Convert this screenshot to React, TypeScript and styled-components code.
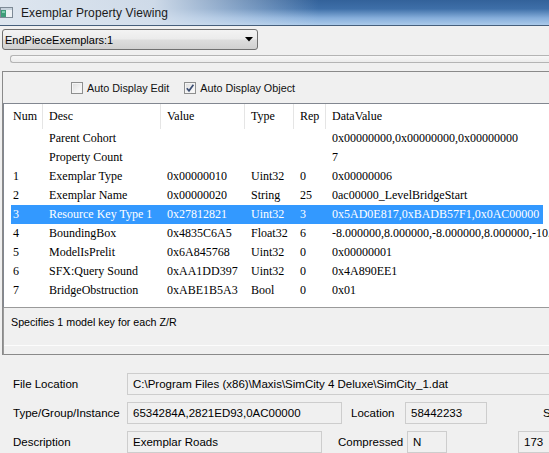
import React from "react";
import styled, { createGlobalStyle } from "styled-components";

const GlobalStyle = createGlobalStyle`
  html, body {
    margin: 0;
    padding: 0;
    background: #f0f0f0;
  }
  body {
    font-family: "Liberation Sans", Arial, sans-serif;
    color: #000;
  }
`;

const Window = styled.div`
  width: 549px;
  height: 453px;
  overflow: hidden;
  background: #f0f0f0;
  display: flex;
  flex-direction: column;
`;

const TitleBar = styled.div`
  flex: none;
  height: 25px;
  display: flex;
  align-items: center;
  gap: 8px;
  border-bottom: 1px solid #465f7c;
  background:
    linear-gradient(90deg, rgba(222, 230, 239, 1) 0%, rgba(214, 224, 236, 0.95) 28%, rgba(205, 219, 235, 0) 58%),
    linear-gradient(180deg, #33629a 0%, #3e6fa8 35%, #86aedb 72%, #abcaea 100%);
`;

const TitleText = styled.span`
  font-size: 12px;
  color: #1a1a1a;
  letter-spacing: 0.1px;
`;

const Body = styled.div`
  flex: 1;
  display: flex;
  flex-direction: column;
  padding-left: 2px;
  min-height: 0;
`;

const Combo = styled.div`
  margin-top: 3px;
  width: 256px;
  height: 21px;
  box-sizing: border-box;
  border: 1px solid #707070;
  border-radius: 3px;
  background: linear-gradient(180deg, #f3f3f3 0%, #ebebeb 48%, #dddddd 52%, #d0d0d0 100%);
  display: flex;
  align-items: center;
  justify-content: space-between;
  padding: 0 4px 0 2px;
  font-size: 11px;
`;

const Progress = styled.div`
  margin: 5px 0 0 8px;
  height: 8px;
  width: 560px;
  box-sizing: border-box;
  border: 1px solid #b4b4b4;
  border-right: none;
  border-radius: 3px 0 0 3px;
  background: linear-gradient(180deg, #f7f7f7, #ececec);
`;

const Panel = styled.div`
  margin-top: 8px;
  border-top: 1px solid #8a8a8a;
  border-left: 1px solid #8a8a8a;
  display: flex;
  flex-direction: column;
`;

const CheckRow = styled.div`
  height: 31px;
  display: flex;
  align-items: center;
  padding-left: 68px;
  gap: 15px;
`;

const CheckItem = styled.label`
  display: flex;
  align-items: center;
  gap: 4px;
  font-size: 10.8px;
  color: #111;
`;

const Box = styled.span`
  width: 12px;
  height: 12px;
  box-sizing: border-box;
  border: 1px solid #8e8f8f;
  background: linear-gradient(135deg, #dcdcdc 0%, #f2f2f2 60%, #fbfbfb 100%);
  box-shadow: inset 0 0 0 1px #f4f4f4;
  display: flex;
  align-items: center;
  justify-content: center;
`;

const Table = styled.div`
  height: 205px;
  box-sizing: border-box;
  background: #fff;
  border-top: 1px solid #828790;
  border-left: 1px solid #828790;
  border-bottom: 1px solid #9a9a9a;
  font-family: "Liberation Serif", "Times New Roman", serif;
  font-size: 12px;
  overflow: hidden;
`;

const HeadRow = styled.div`
  height: 25px;
  display: grid;
  grid-template-columns: 39px 118px 84px 49px 32px 240px;
`;

const HeadCell = styled.div<{ $first?: boolean }>`
  display: flex;
  align-items: center;
  padding-left: ${(p) => (p.$first ? 9 : 6)}px;
  border-right: 1px solid #e5e5e5;
  white-space: nowrap;
`;

const Row = styled.div<{ $selected?: boolean }>`
  margin-left: 7px;
  width: 532px;
  height: 19px;
  display: grid;
  grid-template-columns: 32px 118px 84px 49px 32px 217px;
  background: ${(p) => (p.$selected ? "#3399ff" : "transparent")};
  color: ${(p) => (p.$selected ? "#fff" : "#000")};
`;

const Cell = styled.div<{ $first?: boolean }>`
  display: flex;
  align-items: center;
  padding-left: ${(p) => (p.$first ? 2 : 6)}px;
  white-space: nowrap;
  overflow: visible;
`;

const StatusBox = styled.div`
  height: 47px;
  box-sizing: border-box;
  border-left: 1px solid #9a9a9a;
  border-bottom: 1px solid #8a8a8a;
`;

const StatusInner = styled.div`
  height: 38px;
  box-sizing: border-box;
  border-bottom: 1px solid #fcfcfc;
  padding: 6px 0 0 7px;
  font-size: 10.7px;
  line-height: 16px;
`;

const Form = styled.div`
  margin-top: 18px;
  padding-left: 11px;
  display: flex;
  flex-direction: column;
  gap: 7px;
`;

const FormRow = styled.div`
  height: 22px;
  display: flex;
  align-items: center;
  white-space: nowrap;
`;

const Label = styled.span<{ $w?: number; $ml?: number }>`
  flex: none;
  width: ${(p) => (p.$w ? `${p.$w}px` : "auto")};
  margin-left: ${(p) => p.$ml ?? 0}px;
  font-size: 11.5px;
`;

const Field = styled.div<{ $w: number; $ml?: number }>`
  flex: none;
  width: ${(p) => p.$w}px;
  margin-left: ${(p) => p.$ml ?? 0}px;
  height: 22px;
  box-sizing: border-box;
  border: 1px solid #cdcdcd;
  background: #f0f0f0;
  padding-left: 5px;
  display: flex;
  align-items: center;
  font-size: 11.5px;
  overflow: hidden;
`;

const WindowIcon = () => (
  <svg width="13" height="11" viewBox="0 0 13 11">
    <rect x="0.5" y="0.5" width="12" height="10" fill="#eef2f5" stroke="#7d8a96" />
    <rect x="1" y="1" width="11" height="2" fill="#c8d3dd" />
    <rect x="1" y="3" width="5" height="7" fill="#3f9c7a" />
    <rect x="2" y="4" width="3" height="2" fill="#7fd0ae" />
  </svg>
);

const Arrow = () => (
  <svg width="8" height="5" viewBox="0 0 8 5">
    <path d="M0 0 H8 L4 4.5 Z" fill="#000" />
  </svg>
);

const Check = () => (
  <svg width="10" height="10" viewBox="0 0 10 10">
    <path d="M1.8 5.2 L4 7.8 L8.4 1.8" fill="none" stroke="#3c4e73" strokeWidth="1.7" />
  </svg>
);

type Prop = [string, string, string, string, string, string];

const rows: Prop[] = [
  ["", "Parent Cohort", "", "", "", "0x00000000,0x00000000,0x00000000"],
  ["", "Property Count", "", "", "", "7"],
  ["1", "Exemplar Type", "0x00000010", "Uint32", "0", "0x00000006"],
  ["2", "Exemplar Name", "0x00000020", "String", "25", "0ac00000_LevelBridgeStart"],
  ["3", "Resource Key Type 1", "0x27812821", "Uint32", "3", "0x5AD0E817,0xBADB57F1,0x0AC00000"],
  ["4", "BoundingBox", "0x4835C6A5", "Float32", "6", "-8.000000,8.000000,-8.000000,8.000000,-10.000000"],
  ["5", "ModelIsPrelit", "0x6A845768", "Uint32", "0", "0x00000001"],
  ["6", "SFX:Query Sound", "0xAA1DD397", "Uint32", "0", "0x4A890EE1"],
  ["7", "BridgeObstruction", "0xABE1B5A3", "Bool", "0", "0x01"],
];

const headers = ["Num", "Desc", "Value", "Type", "Rep", "DataValue"];

export default function App() {
  return (
    <>
      <GlobalStyle />
      <Window>
        <TitleBar>
          <WindowIcon />
          <TitleText>Exemplar Property Viewing</TitleText>
        </TitleBar>
        <Body>
          <Combo>
            <span>EndPieceExemplars:1</span>
            <Arrow />
          </Combo>
          <Progress />
          <Panel>
            <CheckRow>
              <CheckItem>
                <Box />
                Auto Display Edit
              </CheckItem>
              <CheckItem>
                <Box>
                  <Check />
                </Box>
                Auto Display Object
              </CheckItem>
            </CheckRow>
            <Table>
              <HeadRow>
                {headers.map((h, i) => (
                  <HeadCell key={h} $first={i === 0}>
                    {h}
                  </HeadCell>
                ))}
              </HeadRow>
              {rows.map((r, i) => (
                <Row key={i} $selected={i === 4}>
                  {r.map((c, j) => (
                    <Cell key={j} $first={j === 0}>
                      {c}
                    </Cell>
                  ))}
                </Row>
              ))}
            </Table>
            <StatusBox>
              <StatusInner>Specifies 1 model key for each Z/R</StatusInner>
            </StatusBox>
          </Panel>
          <Form>
            <FormRow>
              <Label $w={114}>File Location</Label>
              <Field $w={440}>C:\Program Files (x86)\Maxis\SimCity 4 Deluxe\SimCity_1.dat</Field>
            </FormRow>
            <FormRow>
              <Label $w={114}>Type/Group/Instance</Label>
              <Field $w={215}>6534284A,2821ED93,0AC00000</Field>
              <Label $w={54} $ml={9}>Location</Label>
              <Field $w={82}>58442233</Field>
              <Label $ml={56}>Size</Label>
            </FormRow>
            <FormRow>
              <Label $w={114}>Description</Label>
              <Field $w={195}>Exemplar Roads</Field>
              <Label $w={69} $ml={16}>Compressed</Label>
              <Field $w={40}>N</Field>
              <Field $w={60} $ml={71}>173</Field>
            </FormRow>
          </Form>
        </Body>
      </Window>
    </>
  );
}
